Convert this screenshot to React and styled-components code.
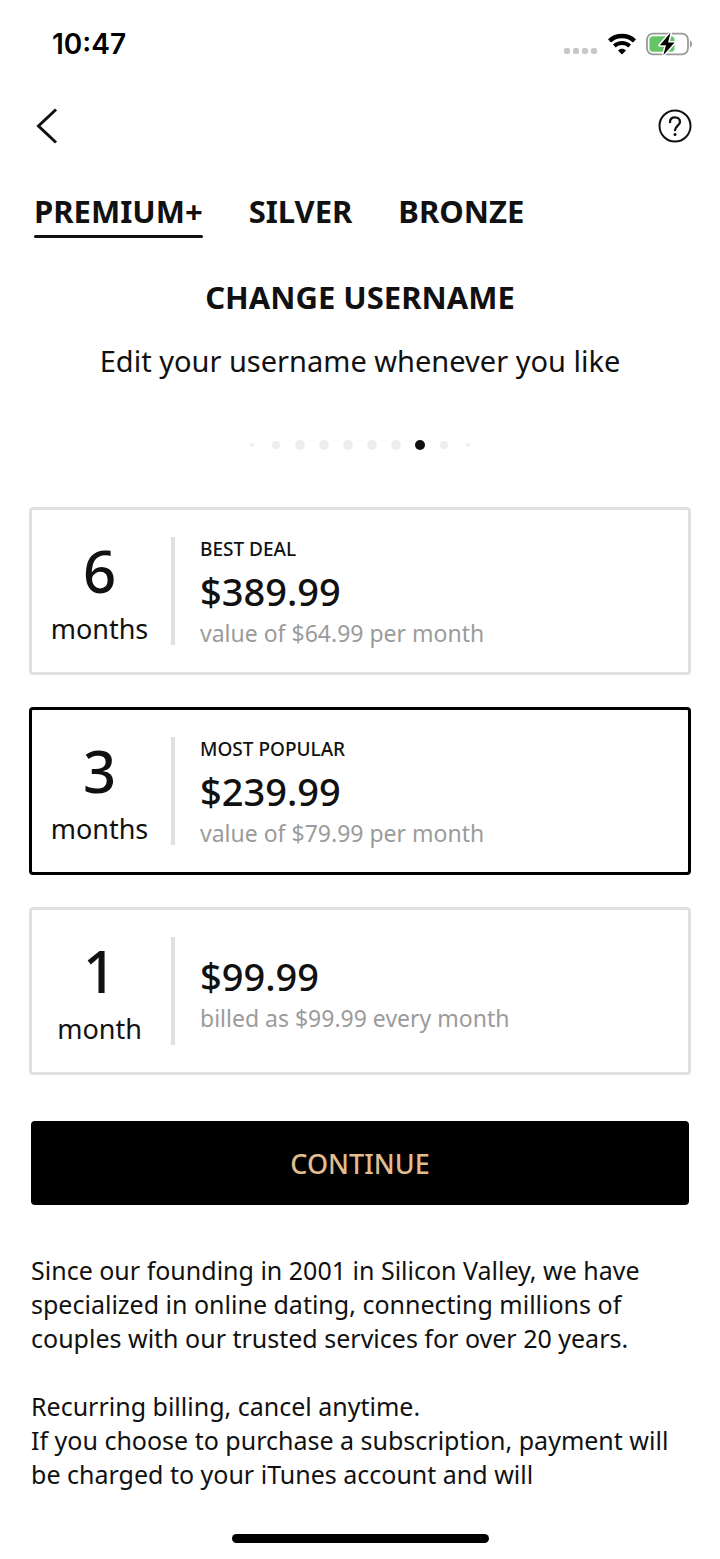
import { useState } from 'react'
import styled, { createGlobalStyle } from 'styled-components'

const GlobalStyle = createGlobalStyle`
    *{
        box-sizing: border-box;
    }
    body{
        margin: 0;
        background: #fff;
        color: #111;
        font-family: "Noto Sans", sans-serif;
    }
    button{
        font-family: inherit;
        color: inherit;
        border: none;
        background: none;
        padding: 0;
        cursor: pointer;
    }
    h1, p{
        margin: 0;
    }
    svg{
        display: block;
    }
`

const Screen = styled.div`
    display: flex;
    flex-direction: column;
    min-height: 100vh;
`

const StatusBar = styled.header`
    display: flex;
    justify-content: space-between;
    align-items: center;
    height: 88px;
    padding: 0 27px 0 52px;
    color: #000;
`

const Clock = styled.time`
    font: 600 28px/34px "Inter", sans-serif;
`

const StatusIcons = styled.div`
    display: flex;
    align-items: center;
    gap: 10px;
`

const NavBar = styled.nav`
    display: flex;
    justify-content: space-between;
    align-items: center;
    height: 76px;
    padding: 0 28px 0 36px;
`

const TabList = styled.div`
    display: flex;
    gap: 46px;
    padding: 25px 34px 0;
`

const Tab = styled.button`
    position: relative;
    padding-bottom: 5px;
    font-size: 31px;
    font-weight: 700;
    line-height: 44px;

    &::after{
        content: '';
        position: absolute;
        inset: auto 0 0;
        height: 3px;
        border-radius: 2px;
        background: ${({ $active }) => ($active ? '#111' : 'transparent')};
    }
`

const Feature = styled.section`
    padding: 37px 30px 0;
    text-align: center;

    h1{
        font-size: 31px;
        font-weight: 700;
        line-height: 44px;
    }
    p{
        font-size: 29px;
        line-height: 40px;
        margin-top: 22px;
    }
`

const Dots = styled.div`
    display: flex;
    justify-content: center;
    align-items: center;
    height: 12px;
    margin-top: 58px;
`

const DotSlot = styled.span`
    display: grid;
    place-items: center;
    width: 24px;
`

const Dot = styled.i`
    width: ${({ $size }) => $size}px;
    height: ${({ $size }) => $size}px;
    border-radius: 50%;
    background: ${({ $active }) => ($active ? '#111' : '#eee')};
`

const PlanList = styled.div`
    display: flex;
    flex-direction: column;
    gap: 32px;
    padding: 56px 29px 0;
`

const PlanCard = styled.label`
    display: flex;
    align-items: center;
    height: 168px;
    border: 3px solid ${({ $selected }) => ($selected ? '#000' : '#e0e0e0')};
    border-radius: 4px;
    cursor: pointer;

    input{
        appearance: none;
        position: absolute;
        margin: 0;
    }
`

const Duration = styled.div`
    display: flex;
    flex-direction: column;
    align-items: center;
    width: 143px;
    height: 108px;
    padding-right: 4px;
    border-right: 4px solid #e0e0e0;
`

const Count = styled.span`
    font-size: 58px;
    font-weight: 500;
    line-height: 68px;
`

const Unit = styled.span`
    font-size: 27px;
    line-height: 48px;
`

const PlanInfo = styled.div`
    display: flex;
    flex-direction: column;
    padding-left: 25px;
`

const Tag = styled.span`
    font-size: 19px;
    font-weight: 500;
    line-height: 30px;
`

const Price = styled.span`
    font-size: 38px;
    font-weight: 500;
    line-height: 54px;
`

const Note = styled.span`
    font-size: 23px;
    line-height: 30px;
    color: #9b9b9b;
`

const ContinueButton = styled.button`
    height: 84px;
    margin: 46px 31px 0;
    border-radius: 4px;
    background: #000;
    color: #e0bc90;
    font-size: 27px;
    font-weight: 500;
`

const Legal = styled.section`
    padding: 48px 31px 0;
    font-size: 25px;
    line-height: 34px;

    p + p{
        margin-top: 34px;
    }
`

const HomeIndicator = styled.div`
    width: 257px;
    height: 9px;
    margin: auto auto 16px;
    border-radius: 5px;
    background: #000;
`

const tabs = ['PREMIUM+', 'SILVER', 'BRONZE']

const dots = [4, 8, 10, 10, 10, 10, 10, 10, 8, 4]

const plans = [
    { id: 'six', count: 6, unit: 'months', tag: 'BEST DEAL', price: '$389.99', note: 'value of $64.99 per month' },
    { id: 'three', count: 3, unit: 'months', tag: 'MOST POPULAR', price: '$239.99', note: 'value of $79.99 per month' },
    { id: 'one', count: 1, unit: 'month', price: '$99.99', note: 'billed as $99.99 every month' },
]

function SignalIcon(){
    return (
        <svg width="34" height="24" viewBox="0 0 34 24" fill="#c8c8c8">
            <rect x="0" y="16" width="6" height="6" rx="2" />
            <rect x="9" y="16" width="6" height="6" rx="2" />
            <rect x="18" y="16" width="6" height="6" rx="2" />
            <rect x="27" y="16" width="6" height="6" rx="2" />
        </svg>
    )
}

function WifiIcon(){
    return (
        <svg width="28" height="22" viewBox="0 0 28 22">
            <path d="M1.5 7.8C8.5 1.4 19.5 1.4 26.5 7.8" fill="none" stroke="#000" strokeWidth="4.4" />
            <path d="M6.3 13C10.7 9 17.3 9 21.7 13" fill="none" stroke="#000" strokeWidth="4" />
            <path d="M10 17.4C12.3 15.2 15.7 15.2 18 17.4L14 21.6Z" fill="#000" />
        </svg>
    )
}

function BatteryIcon(){
    return (
        <svg width="47" height="24" viewBox="0 0 47 24">
            <rect x="1" y="1.7" width="41" height="20.6" rx="6" fill="none" stroke="#999" strokeWidth="1.8" />
            <path d="M44 8.5C46.8 9.8 46.8 14.2 44 15.5Z" fill="#999" />
            <rect x="3.5" y="4.3" width="25" height="15.4" rx="3.5" fill="#65c466" />
            <path d="M24.5 .8L13.8 13.3H20L17.3 23.2L28.6 10.4H22.1Z" fill="#000" stroke="#fff" strokeWidth="3" paintOrder="stroke" strokeLinejoin="round" />
        </svg>
    )
}

function BackIcon(){
    return (
        <svg width="22" height="36" viewBox="0 0 22 36" fill="none" stroke="#111" strokeWidth="3">
            <path d="M20 1.5L2.5 18L20 34.5" />
        </svg>
    )
}

function HelpIcon(){
    return (
        <svg width="34" height="34" viewBox="0 0 34 34" fill="none" stroke="#111" strokeWidth="2">
            <circle cx="17" cy="17" r="15.5" />
            <path d="M12 13.2C12 10 14.1 8.4 17 8.4C19.9 8.4 22 10.2 22 13C22 16.4 17 16.8 17 21.2" strokeWidth="2.3" strokeLinecap="round" />
            <circle cx="17" cy="25.6" r="1.5" fill="#111" stroke="none" />
        </svg>
    )
}

function Plan({ plan, selected, onSelect }){
    return (
        <PlanCard $selected={selected}>
            <input type="radio" name="plan" value={plan.id} checked={selected} onChange={() => onSelect(plan.id)} />
            <Duration>
                <Count>{plan.count}</Count>
                <Unit>{plan.unit}</Unit>
            </Duration>
            <PlanInfo>
                {plan.tag ? <Tag>{plan.tag}</Tag> : null}
                <Price>{plan.price}</Price>
                <Note>{plan.note}</Note>
            </PlanInfo>
        </PlanCard>
    )
}

function App(){
    const [activeTab, setActiveTab] = useState('PREMIUM+')
    const [selectedPlan, setSelectedPlan] = useState('three')

    return (
        <Screen>
            <GlobalStyle />
            <StatusBar>
                <Clock>10:47</Clock>
                <StatusIcons>
                    <SignalIcon />
                    <WifiIcon />
                    <BatteryIcon />
                </StatusIcons>
            </StatusBar>
            <NavBar>
                <button aria-label="Back"><BackIcon /></button>
                <button aria-label="Help"><HelpIcon /></button>
            </NavBar>
            <TabList role="tablist">
                {tabs.map(tab => (
                    <Tab key={tab} role="tab" aria-selected={tab === activeTab} $active={tab === activeTab} onClick={() => setActiveTab(tab)}>
                        {tab}
                    </Tab>
                ))}
            </TabList>
            <Feature>
                <h1>CHANGE USERNAME</h1>
                <p>Edit your username whenever you like</p>
                <Dots>
                    {dots.map((size, i) => (
                        <DotSlot key={i}><Dot $size={size} $active={i === 7} /></DotSlot>
                    ))}
                </Dots>
            </Feature>
            <PlanList role="radiogroup" aria-label="Plans">
                {plans.map(plan => (
                    <Plan key={plan.id} plan={plan} selected={plan.id === selectedPlan} onSelect={setSelectedPlan} />
                ))}
            </PlanList>
            <ContinueButton>CONTINUE</ContinueButton>
            <Legal>
                <p>Since our founding in 2001 in Silicon Valley, we have specialized in online dating, connecting millions of couples with our trusted services for over 20 years.</p>
                <p>
                    Recurring billing, cancel anytime.<br />
                    If you choose to purchase a subscription, payment will be charged to your iTunes account and will
                </p>
            </Legal>
            <HomeIndicator />
        </Screen>
    )
}

export default App
